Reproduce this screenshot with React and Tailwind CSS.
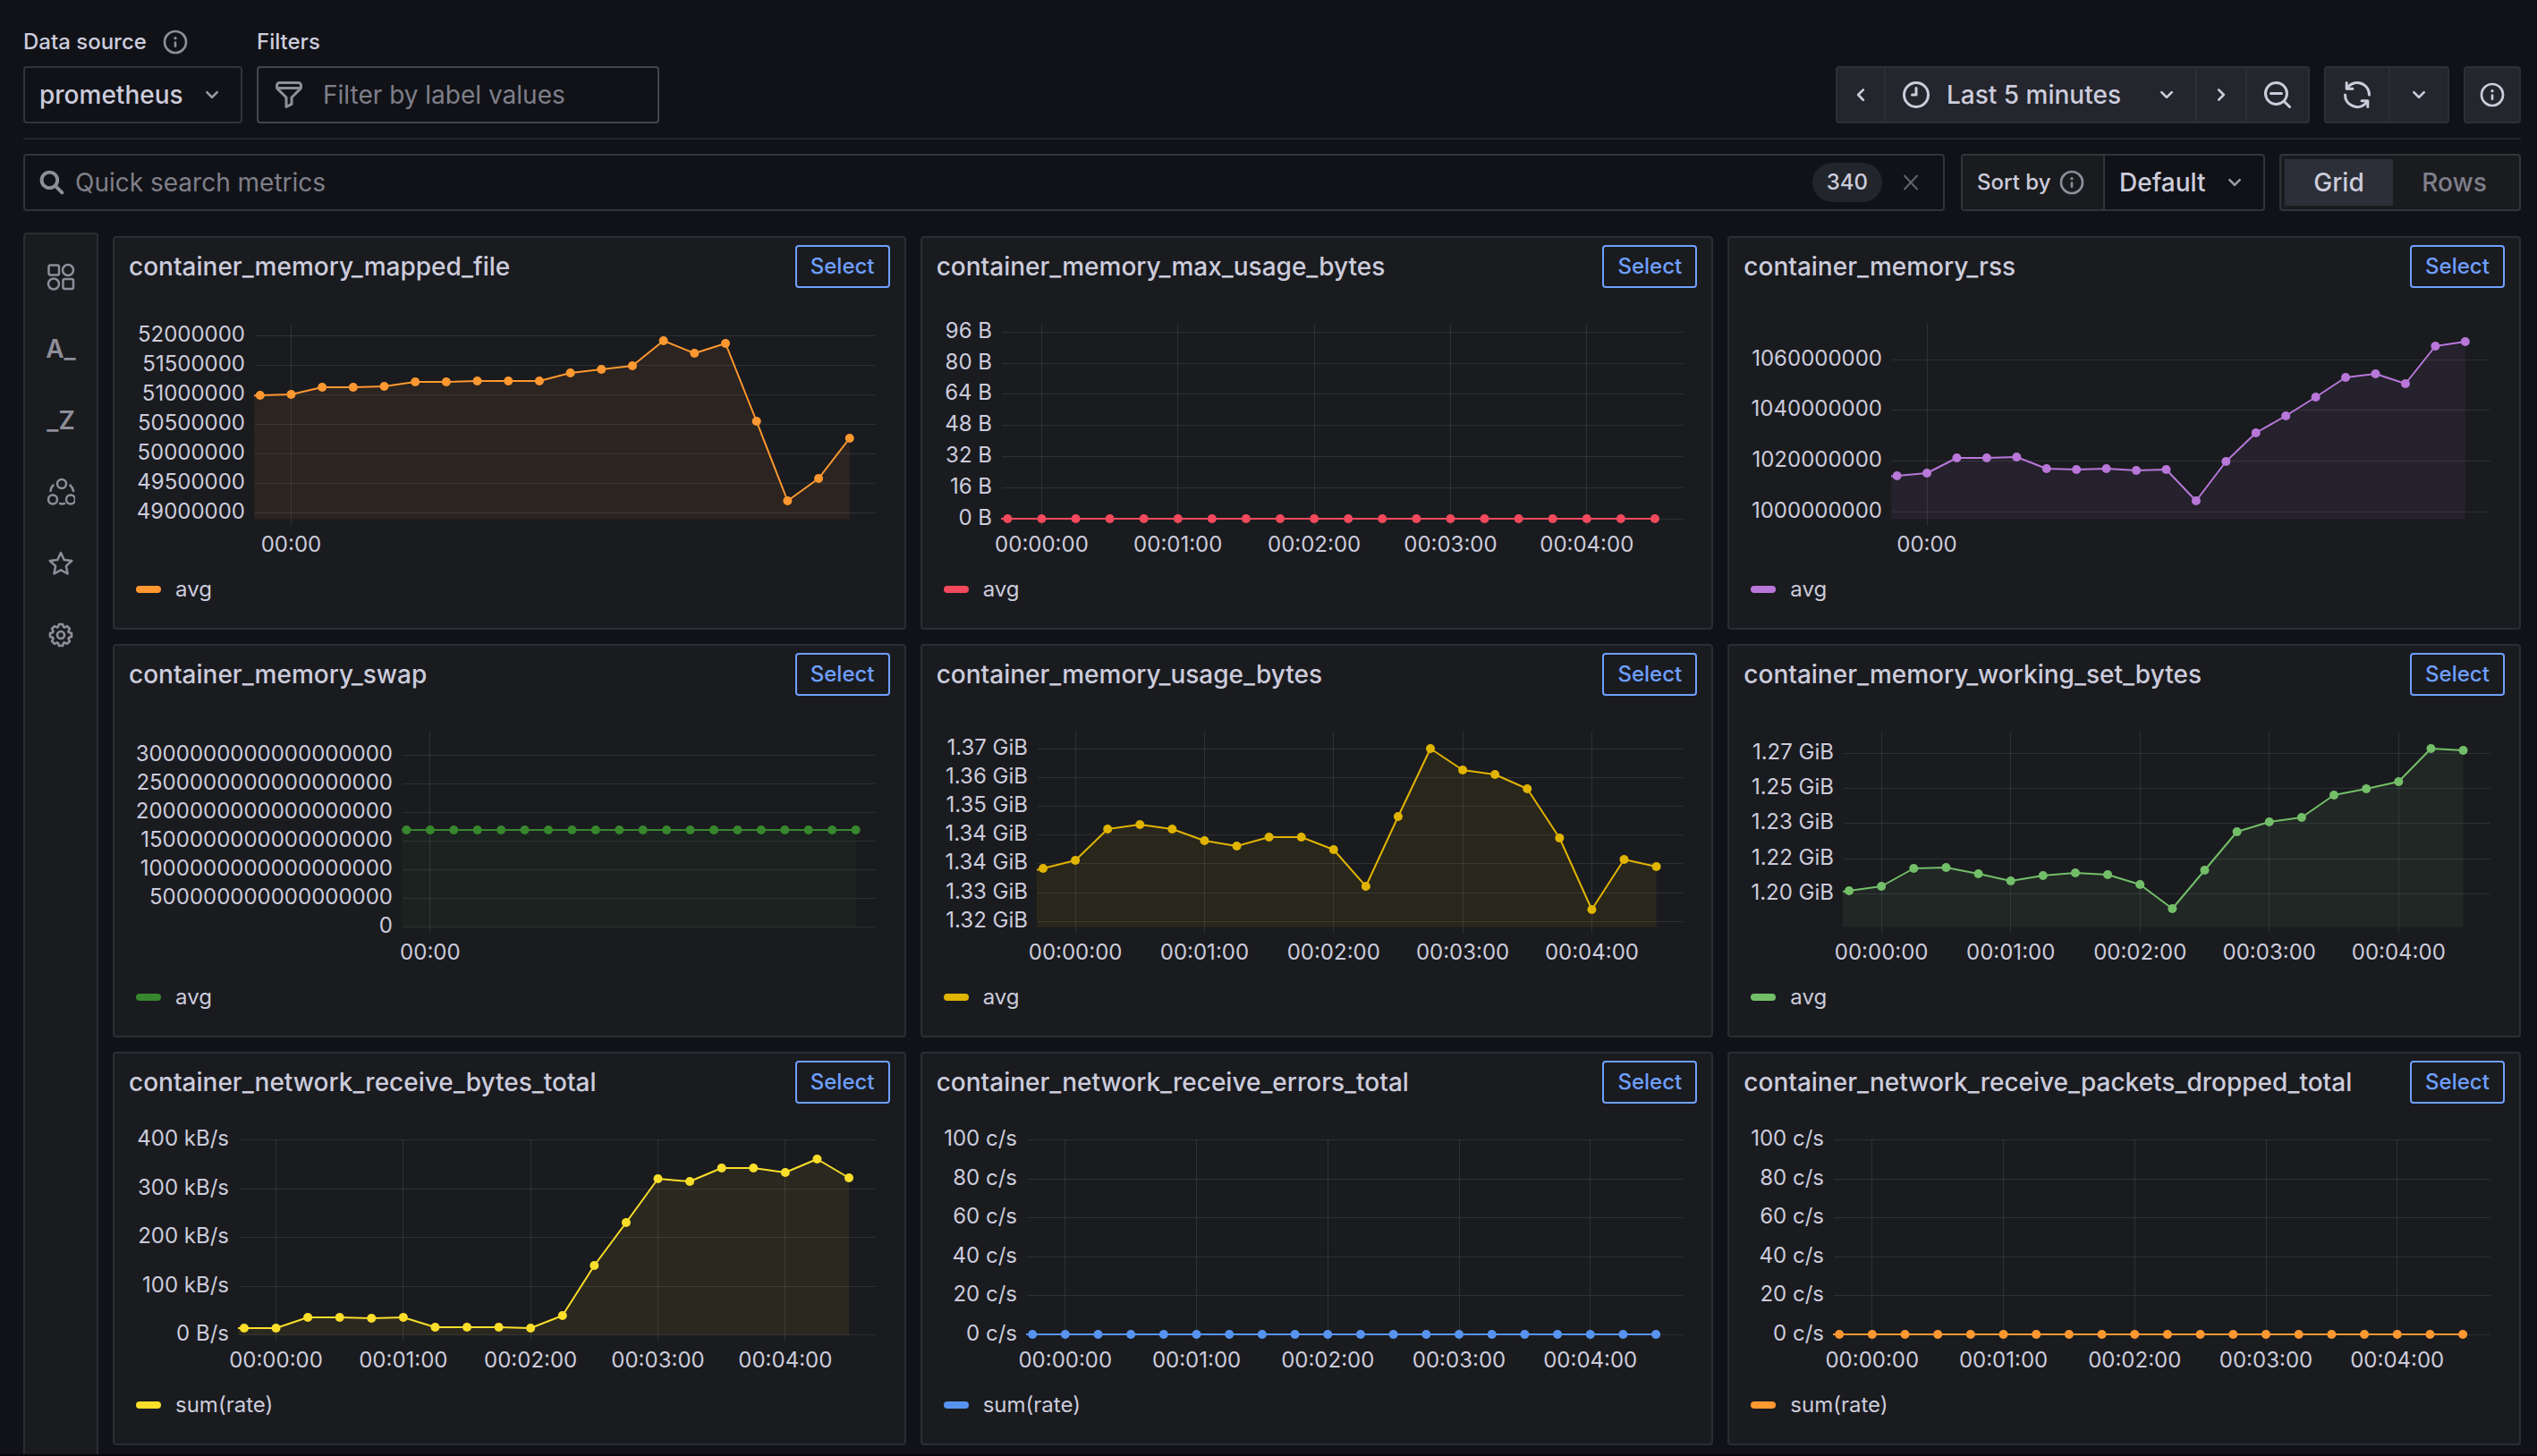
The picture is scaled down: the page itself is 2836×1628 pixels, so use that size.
import { useLayoutEffect, useRef, useState } from 'react';

const PATHS = {
  info: 'M12,2A10,10,0,1,0,22,12,10,10,0,0,0,12,2Zm0,18a8,8,0,1,1,8-8A8,8,0,0,1,12,20Zm0-8.5a1,1,0,0,0-1,1v3a1,1,0,0,0,2,0v-3A1,1,0,0,0,12,11.5Zm0-4a1.25,1.25,0,1,0,1.25,1.25A1.25,1.25,0,0,0,12,7.5Z',
  down: 'M17,9.17a1,1,0,0,0-1.41,0L12,12.71,8.46,9.17a1,1,0,0,0-1.41,0,1,1,0,0,0,0,1.42l4.24,4.24a1,1,0,0,0,1.42,0L17,10.59A1,1,0,0,0,17,9.17Z',
  left: 'M11.29,12l3.54-3.54a1,1,0,0,0,0-1.41,1,1,0,0,0-1.42,0L9.17,11.29a1,1,0,0,0,0,1.42L13.41,17a1,1,0,0,0,.71.29,1,1,0,0,0,.71-.29,1,1,0,0,0,0-1.41Z',
  right:
    'M14.83,11.29,10.59,7.05a1,1,0,0,0-1.42,0,1,1,0,0,0,0,1.41L12.71,12,9.17,15.54a1,1,0,0,0,0,1.41,1,1,0,0,0,.71.29,1,1,0,0,0,.71-.29l4.24-4.24A1,1,0,0,0,14.83,11.29Z',
  clock:
    'M12,2A10,10,0,1,0,22,12,10,10,0,0,0,12,2Zm0,18a8,8,0,1,1,8-8A8,8,0,0,1,12,20ZM12,6a1,1,0,0,0-1,1v4H9a1,1,0,0,0,0,2h3a1,1,0,0,0,1-1V7A1,1,0,0,0,12,6Z',
  zoomOut:
    'M21.71,20.29,18,16.61A9,9,0,1,0,16.61,18l3.68,3.68a1,1,0,0,0,1.42,0A1,1,0,0,0,21.71,20.29ZM11,18a7,7,0,1,1,7-7A7,7,0,0,1,11,18Zm4-8H7a1,1,0,0,0,0,2h8a1,1,0,0,0,0-2Z',
  sync: 'M19.91,15.51H15.38a1,1,0,0,0,0,2h2.4A8,8,0,0,1,4,12a1,1,0,1,0-2,0,10,10,0,0,0,16.88,7.23V21a1,1,0,0,0,2,0V16.5A1,1,0,0,0,19.91,15.51ZM12,2A10,10,0,0,0,5.12,4.77V3a1,1,0,0,0-2,0V7.5a1,1,0,0,0,1,1h4.5a1,1,0,0,0,0-2H6.22A8,8,0,0,1,20,12a1,1,0,0,0,2,0A10,10,0,0,0,12,2Z',
  filter:
    'M19,2H5A3,3,0,0,0,2,5V6.17a3,3,0,0,0,.25,1.2l0,.06a2.81,2.81,0,0,0,.59.86L9,14.41V21a1,1,0,0,0,.47.85A1,1,0,0,0,10,22a1,1,0,0,0,.45-.11l4-2A1,1,0,0,0,15,19V14.41l6.12-6.12a2.81,2.81,0,0,0,.59-.86l0-.06A3,3,0,0,0,22,6.17V5A3,3,0,0,0,19,2ZM13.29,13.29A1,1,0,0,0,13,14v4.38l-2,1V14a1,1,0,0,0-.29-.71L5.41,8H18.59ZM20,6H4V5A1,1,0,0,1,5,4H19a1,1,0,0,1,1,1Z',
  cog: 'M21.32,9.55l-1.89-.63.89-1.78A1,1,0,0,0,20.13,6L18,3.87a1,1,0,0,0-1.15-.19l-1.78.89-.63-1.89A1,1,0,0,0,13.5,2h-3a1,1,0,0,0-.95.68L8.92,4.57,7.14,3.68A1,1,0,0,0,6,3.87L3.87,6a1,1,0,0,0-.19,1.15l.89,1.78-1.89.63A1,1,0,0,0,2,10.5v3a1,1,0,0,0,.68.95l1.89.63-.89,1.78A1,1,0,0,0,3.87,18L6,20.13a1,1,0,0,0,1.15.19l1.78-.89.63,1.89a1,1,0,0,0,.95.68h3a1,1,0,0,0,.95-.68l.63-1.89,1.78.89A1,1,0,0,0,18,20.13L20.13,18a1,1,0,0,0,.19-1.15l-.89-1.78,1.89-.63A1,1,0,0,0,22,13.5v-3A1,1,0,0,0,21.32,9.55ZM20,12.78l-1.2.4A2,2,0,0,0,17.64,16l.57,1.14-1.1,1.1L16,17.64a2,2,0,0,0-2.79,1.16l-.4,1.2H11.22l-.4-1.2A2,2,0,0,0,8,17.64l-1.14.57-1.1-1.1L6.36,16A2,2,0,0,0,5.2,13.18L4,12.78V11.22l1.2-.4A2,2,0,0,0,6.36,8L5.79,6.89l1.1-1.1L8,6.36A2,2,0,0,0,10.82,5.2l.4-1.2h1.56l.4,1.2A2,2,0,0,0,16,6.36l1.14-.57,1.1,1.1L17.64,8a2,2,0,0,0,1.16,2.79l1.2.4ZM12,8a4,4,0,1,0,4,4A4,4,0,0,0,12,8Zm0,6a2,2,0,1,1,2-2A2,2,0,0,1,12,14Z',
};

function Icon({ name, className = 'size-8' }) {
  return (
    <svg viewBox="0 0 24 24" fill="currentColor" aria-hidden="true" className={`shrink-0 ${className}`}>
      <path d={PATHS[name]} />
    </svg>
  );
}

function LineIcon({ children, className = 'size-8', strokeWidth = 2 }) {
  return (
    <svg
      viewBox="0 0 32 32"
      fill="none"
      stroke="currentColor"
      strokeWidth={strokeWidth}
      strokeLinecap="round"
      strokeLinejoin="round"
      aria-hidden="true"
      className={`shrink-0 ${className}`}
    >
      {children}
    </svg>
  );
}

const MINUTES = ['00:00:00', '00:01:00', '00:02:00', '00:03:00', '00:04:00'];
const flat = (y) => Array(20).fill(y);

// `ticks` and `points` are heights in the chart's drawing area; `left` is the y axis width.
const METRICS = [
  {
    name: 'container_memory_mapped_file',
    legend: 'avg',
    color: '#ff9830',
    left: 157,
    times: ['00:00'],
    ticks: [['52000000', 45], ['51500000', 78], ['51000000', 111], ['50500000', 144], ['50000000', 177], ['49500000', 210], ['49000000', 243]],
    points: [112, 111, 103, 103, 102, 97, 97, 96, 96, 96, 87, 83, 79, 51, 65, 54, 141, 230, 205, 160],
  },
  {
    name: 'container_memory_max_usage_bytes',
    legend: 'avg',
    color: '#f2495c',
    left: 89,
    times: MINUTES,
    ticks: [['96 B', 41], ['80 B', 76], ['64 B', 110], ['48 B', 145], ['32 B', 180], ['16 B', 215], ['0 B', 250]],
    points: flat(250),
  },
  {
    name: 'container_memory_rss',
    legend: 'avg',
    color: '#b877d9',
    left: 182,
    times: ['00:00'],
    ticks: [['1060000000', 72], ['1040000000', 128], ['1020000000', 185], ['1000000000', 242]],
    points: [202, 199, 182, 182, 181, 194, 195, 194, 196, 195, 230, 186, 154, 135, 114, 92, 88, 99, 57, 52],
  },
  {
    name: 'container_memory_swap',
    legend: 'avg',
    color: '#37872d',
    left: 322,
    times: ['00:00'],
    ticks: [
      ['3000000000000000000', 58],
      ['2500000000000000000', 90],
      ['2000000000000000000', 122],
      ['1500000000000000000', 154],
      ['1000000000000000000', 186],
      ['500000000000000000', 218],
      ['0', 250],
    ],
    points: flat(142),
  },
  {
    name: 'container_memory_usage_bytes',
    legend: 'avg',
    color: '#e0b400',
    left: 129,
    times: MINUTES,
    ticks: [['1.37 GiB', 51], ['1.36 GiB', 83], ['1.35 GiB', 115], ['1.34 GiB', 147], ['1.34 GiB', 179], ['1.33 GiB', 212], ['1.32 GiB', 244]],
    points: [185, 176, 141, 136, 141, 154, 160, 150, 150, 164, 205, 127, 51, 75, 80, 96, 151, 231, 175, 183],
  },
  {
    name: 'container_memory_working_set_bytes',
    legend: 'avg',
    color: '#73bf69',
    left: 128,
    times: MINUTES,
    ticks: [['1.27 GiB', 56], ['1.25 GiB', 95], ['1.23 GiB', 134], ['1.22 GiB', 174], ['1.20 GiB', 213]],
    points: [210, 205, 185, 184, 191, 199, 193, 190, 192, 203, 230, 187, 144, 133, 128, 103, 96, 88, 51, 53],
  },
  {
    name: 'container_network_receive_bytes_total',
    legend: 'sum(rate)',
    color: '#fade2a',
    left: 139,
    times: MINUTES,
    ticks: [['400 kB/s', 32], ['300 kB/s', 87], ['200 kB/s', 141], ['100 kB/s', 196], ['0 B/s', 250]],
    points: [243, 243, 231, 231, 232, 231, 242, 242, 242, 243, 229, 173, 125, 76, 79, 64, 64, 69, 54, 75],
  },
  {
    name: 'container_network_receive_errors_total',
    legend: 'sum(rate)',
    color: '#5794f2',
    left: 117,
    times: MINUTES,
    ticks: [['100 c/s', 32], ['80 c/s', 76], ['60 c/s', 119], ['40 c/s', 163], ['20 c/s', 206], ['0 c/s', 250]],
    points: flat(250),
  },
  {
    name: 'container_network_receive_packets_dropped_total',
    legend: 'sum(rate)',
    color: '#ff9830',
    left: 117,
    times: MINUTES,
    ticks: [['100 c/s', 32], ['80 c/s', 76], ['60 c/s', 119], ['40 c/s', 163], ['20 c/s', 206], ['0 c/s', 250]],
    points: flat(250),
  },
];

const PLOT_TOP = 32;
const PLOT_BOTTOM = 250.5;

function Chart({ metric }) {
  const ref = useRef(null);
  const [width, setWidth] = useState(882);

  useLayoutEffect(() => {
    const measure = () => setWidth(ref.current.getBoundingClientRect().width);
    measure();
    const observer = new ResizeObserver(measure);
    observer.observe(ref.current);
    return () => observer.disconnect();
  }, []);

  const { left, ticks, times, points, color } = metric;
  const right = width - 32;
  const xAt = (seconds) => left + (seconds / 300) * (right - left);
  const xs = points.map((_, i) => xAt(i * 15 + 2.5));
  const edge = left - 1;
  const edgeY = points[0] - ((points[1] - points[0]) * (xs[0] - edge)) / (xs[1] - xs[0]);
  const line = [[edge, edgeY], ...points.map((y, i) => [xs[i], y])].map((p) => p.join(',')).join(' L');

  return (
    <svg ref={ref} className="block h-[297px] w-full" role="img" aria-label={`${metric.name} chart`}>
      <g stroke="#f0faff" strokeOpacity="0.09" strokeWidth="1">
        {ticks.map(([, y]) => (
          <line key={y} x1={left} x2={right} y1={y + 0.5} y2={y + 0.5} />
        ))}
        {times.map((t, i) => {
          const x = Math.floor(xAt(17.5 + i * 60)) + 0.5;
          return <line key={t} x1={x} x2={x} y1={PLOT_TOP} y2="258" />;
        })}
      </g>
      <path d={`M${line} L${xs[19]},${PLOT_BOTTOM} L${edge},${PLOT_BOTTOM} Z`} fill={color} fillOpacity="0.08" />
      <path d={`M${line}`} fill="none" stroke={color} strokeWidth="2" strokeLinejoin="round" />
      {points.map((y, i) => (
        <circle key={i} cx={xs[i]} cy={y} r="5" fill={color} />
      ))}
      <g className="fill-[#ccccdc] text-[24px]">
        {ticks.map(([label, y]) => (
          <text key={y} x={left - 11} y={y + 7} textAnchor="end">
            {label}
          </text>
        ))}
        {times.map((t, i) => (
          <text key={t} x={xAt(17.5 + i * 60)} y="287" textAnchor="middle">
            {t}
          </text>
        ))}
      </g>
    </svg>
  );
}

function MetricCard({ metric }) {
  return (
    <section className="h-[440px] min-w-0 overflow-hidden rounded-sm border-2 border-[#2c2d33] bg-[#1a1b1f]">
      <header className="flex items-center justify-between gap-4 px-4 pt-2">
        <h2 className="min-w-0 truncate text-[28px] leading-10 font-medium">{metric.name}</h2>
        <button
          type="button"
          className="h-12 w-[106px] shrink-0 rounded-sm border-2 border-[#6e9fff] text-[24px] leading-none font-medium text-[#6e9fff]"
        >
          Select
        </button>
      </header>
      <div className="pt-2">
        <Chart metric={metric} />
      </div>
      <div className="mt-4 flex h-8 items-center gap-4 px-6 text-[24px] leading-8">
        <span className="h-2 w-7 rounded-full" style={{ backgroundColor: metric.color }} />
        {metric.legend}
      </div>
    </section>
  );
}

const TOOL = 'flex h-full items-center border-y-2 border-r-2 border-[#2e2f35] bg-[#24252d]';

function TopBar() {
  return (
    <div className="flex items-end gap-4 border-b-2 border-[#25262b] pb-4">
      <div>
        <div className="mb-3 flex h-[30px] items-center gap-4 text-[24px] font-medium">
          <label htmlFor="datasource">Data source</label>
          <Icon name="info" className="size-8 text-[#8e8e99]" />
        </div>
        <div className="relative w-[245px]">
          <select
            id="datasource"
            className="h-16 w-full appearance-none rounded-sm border-2 border-[#33343a] bg-transparent pl-4 text-[28px] font-medium"
          >
            <option>prometheus</option>
          </select>
          <span className="pointer-events-none absolute inset-y-0 right-[18px] flex items-center text-[#9a9aa6]">
            <Icon name="down" />
          </span>
        </div>
      </div>
      <div>
        <label htmlFor="filters" className="mb-3 flex h-[30px] items-center text-[24px] font-medium">
          Filters
        </label>
        <div className="flex h-16 w-[450px] items-center gap-5 rounded-sm border-2 border-[#45464d] pl-4">
          <Icon name="filter" className="size-9 text-[#8e8e99]" />
          <input
            id="filters"
            type="text"
            placeholder="Filter by label values"
            className="min-w-0 flex-1 bg-transparent text-[28px] outline-none placeholder:text-[#7f7f8a]"
          />
        </div>
      </div>
      <div className="ml-auto flex h-16 gap-4">
        <div className="flex">
          <button
            type="button"
            aria-label="Move time range backwards"
            className={`${TOOL} w-14 justify-center rounded-l-sm border-l-2`}
          >
            <Icon name="left" />
          </button>
          <button type="button" className={`${TOOL} w-[348px] gap-4 px-4 text-[28px] font-medium`}>
            <Icon name="clock" className="size-9" />
            Last 5 minutes
            <Icon name="down" className="ml-auto size-8" />
          </button>
          <button type="button" aria-label="Move time range forwards" className={`${TOOL} w-14 justify-center`}>
            <Icon name="right" />
          </button>
          <button type="button" aria-label="Zoom out time range" className={`${TOOL} w-[70px] justify-center rounded-r-sm`}>
            <Icon name="zoomOut" className="size-9" />
          </button>
        </div>
        <div className="flex">
          <button type="button" aria-label="Refresh" className={`${TOOL} w-[74px] justify-center rounded-l-sm border-l-2`}>
            <Icon name="sync" className="size-9" />
          </button>
          <button type="button" aria-label="Auto refresh interval" className={`${TOOL} w-[66px] justify-center rounded-r-sm`}>
            <Icon name="down" />
          </button>
        </div>
        <button
          type="button"
          aria-label="Plugin information"
          className={`${TOOL} w-16 justify-center rounded-sm border-l-2`}
        >
          <Icon name="info" />
        </button>
      </div>
    </div>
  );
}

function SearchBar() {
  return (
    <div className="mt-4 flex h-16 items-stretch">
      <div className="flex min-w-0 flex-1 items-center rounded-sm border-2 border-[#33343a] px-4">
        <LineIcon className="size-7 text-[#8e8e99]" strokeWidth="4.5">
          <circle cx="13" cy="13" r="10" />
          <path d="M21 21l8 8" />
        </LineIcon>
        <input
          type="text"
          aria-label="Quick search metrics"
          placeholder="Quick search metrics"
          className="ml-3 min-w-0 flex-1 bg-transparent text-[28px] outline-none placeholder:text-[#7f7f8a]"
        />
        <span className="flex h-11 items-center rounded-full bg-[#22252b] px-4 text-[24px] font-medium">340</span>
        <button type="button" aria-label="Clear search" className="ml-3 p-1 text-[#62636c]">
          <LineIcon>
            <path d="M9 8.500l14 15M23 8.500L9 23.500" />
          </LineIcon>
        </button>
      </div>
      <div className="ml-[18px] flex w-[340px] rounded-sm border-2 border-[#33343a]">
        <div className="flex w-[159px] items-center gap-2 border-r-2 border-[#33343a] bg-[#1a1b1f] pl-4 text-[24px] font-medium whitespace-nowrap">
          <label htmlFor="sort">Sort by</label>
          <Icon name="info" className="size-8 text-[#8e8e99]" />
        </div>
        <div className="relative min-w-0 flex-1">
          <select id="sort" className="h-full w-full appearance-none bg-transparent pl-4 text-[28px] font-medium">
            <option>Default</option>
          </select>
          <span className="pointer-events-none absolute inset-y-0 right-4 flex items-center text-[#9a9aa6]">
            <Icon name="down" />
          </span>
        </div>
      </div>
      <fieldset className="ml-4 flex w-[270px] rounded-sm border-2 border-[#33343a] bg-[#1a1b1f] p-1 text-[28px] font-medium">
        <label className="flex flex-auto items-center justify-center bg-[#2c2f37] px-8">
          <input type="radio" name="layout" defaultChecked className="sr-only" />
          Grid
        </label>
        <label className="flex flex-auto items-center justify-center px-8 text-[#7f7f8a]">
          <input type="radio" name="layout" className="sr-only" />
          Rows
        </label>
      </fieldset>
    </div>
  );
}

const SIDE_BUTTONS = [
  [
    'Rules filters',
    <LineIcon key="i" strokeWidth="2.5">
      <rect x="2.5" y="2.5" width="11.5" height="11" rx="2" />
      <circle cx="24" cy="8" r="6" />
      <circle cx="8" cy="23.5" r="6" />
      <rect x="18.5" y="18" width="11.5" height="11" rx="2" />
    </LineIcon>,
  ],
  ['Prefix filters', 'A_'],
  ['Suffix filters', '_Z'],
  [
    'Group by labels',
    <LineIcon key="i" strokeWidth="2.5">
      <circle cx="17" cy="7" r="5" />
      <circle cx="7" cy="24.5" r="5" />
      <circle cx="27" cy="24.5" r="5" />
      <path d="M7.5 8.5Q4.5 11.5 4.5 15M26.5 8.5Q29.5 11.5 30 15M15 29Q17.5 29.8 20 29" />
    </LineIcon>,
  ],
  [
    'Bookmarks',
    <LineIcon key="i" strokeWidth="2.5">
      <path d="M16 4l3.7 8 8.6 1-6.4 5.9 1.7 8.600-7.6-4.200-7.6 4.200 1.7-8.600L3.7 13l8.6-1z" />
    </LineIcon>,
  ],
  ['Settings', <Icon key="i" name="cog" />],
];

export default function App() {
  return (
    <div className="flex min-h-screen flex-col border-b-2 border-[#06060a] bg-[#111217] pt-8 pr-[18px] pl-[26px] font-['Inter',sans-serif] text-[#ccccdc]">
      <TopBar />
      <SearchBar />
      <main className="mt-6 flex flex-1 gap-4">
        <nav
          aria-label="Filters"
          className="flex w-[84px] shrink-0 flex-col items-center gap-8 rounded-t-sm border-x-2 border-t-2 border-[#2c2d33] bg-[#1a1b1f] pt-6 text-[#8e8e99]"
        >
          {SIDE_BUTTONS.map(([label, icon]) => (
            <button
              key={label}
              type="button"
              aria-label={label}
              className="flex h-12 w-12 items-center justify-center text-[28px] font-semibold"
            >
              {icon}
            </button>
          ))}
        </nav>
        <div className="mt-1 grid min-w-0 flex-1 grid-cols-3 content-start gap-4 pb-2.5">
          {METRICS.map((m) => (
            <MetricCard key={m.name} metric={m} />
          ))}
        </div>
      </main>
    </div>
  );
}
